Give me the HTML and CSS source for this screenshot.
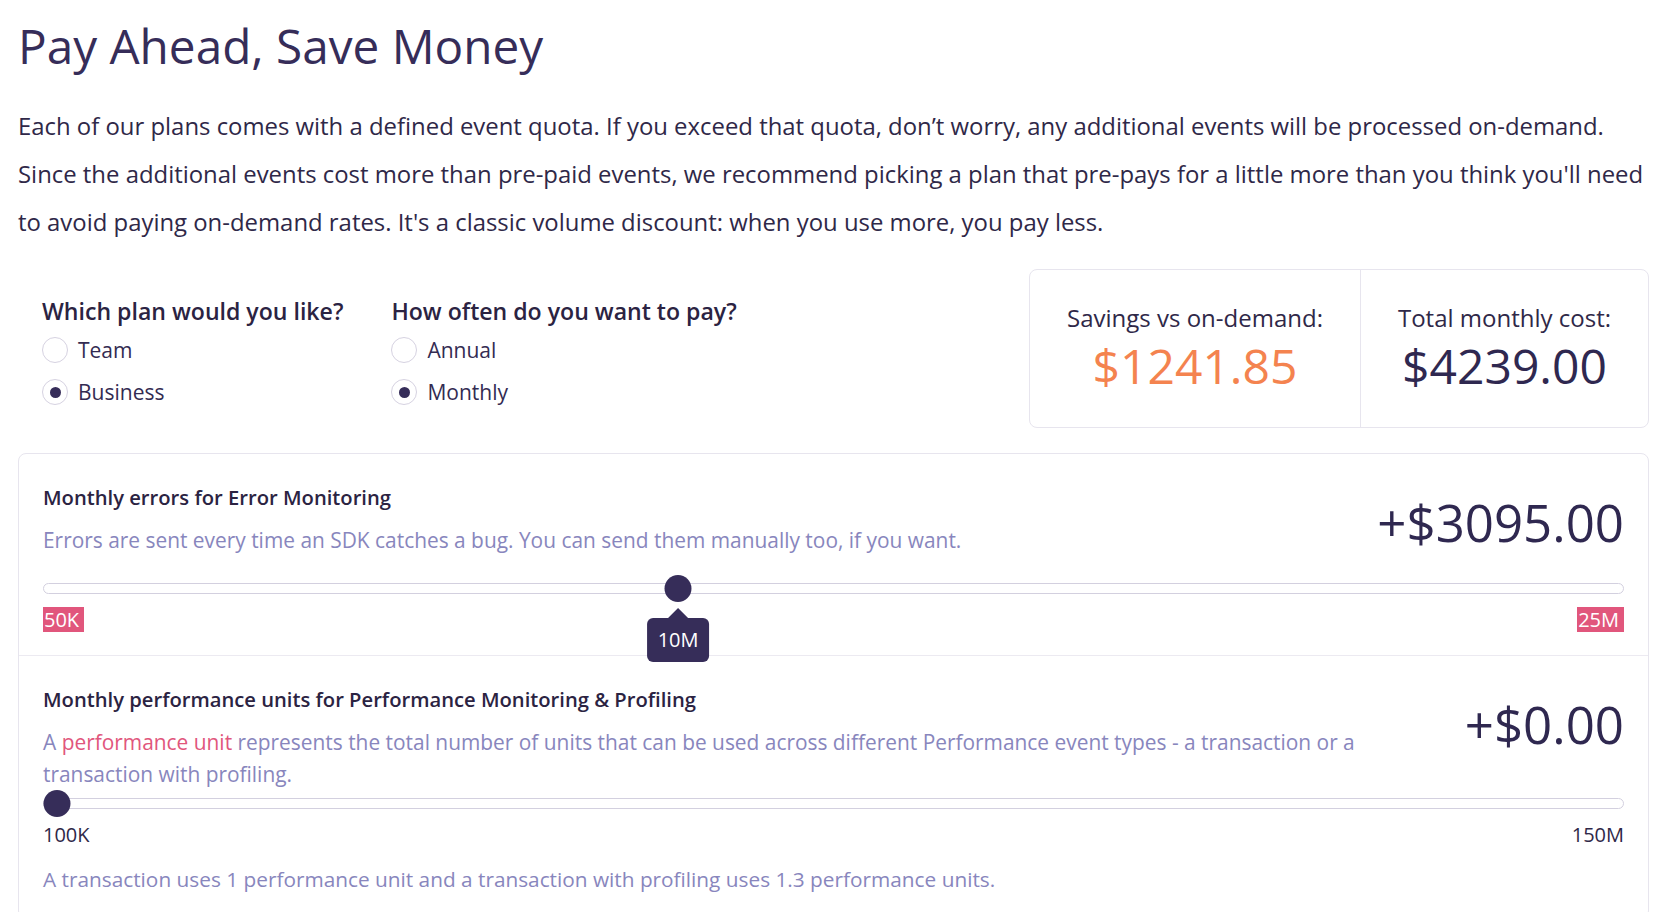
FILE: index.html
```html
<!DOCTYPE html>
<html lang="en">
<head>
<meta charset="utf-8">
<title>Pay Ahead, Save Money</title>
<link rel="stylesheet" href="styles.css">
</head>
<body>
<main class="page">
  <h1 class="title">Pay Ahead, Save Money</h1>
  <p class="intro">Each of our plans comes with a defined event quota. If you exceed that quota, don’t worry, any additional events will be processed on-demand.<br>Since the additional events cost more than pre-paid events, we recommend picking a plan that pre-pays for a little more than you think you'll need<br>to avoid paying on-demand rates. It's a classic volume discount: when you use more, you pay less.</p>

  <section class="controls">
    <div class="choices">
      <div class="choice-group">
        <div class="question">Which plan would you like?</div>
        <label class="radio"><span class="radio-circle"></span>Team</label>
        <label class="radio is-checked"><span class="radio-circle"></span>Business</label>
      </div>
      <div class="choice-group">
        <div class="question">How often do you want to pay?</div>
        <label class="radio"><span class="radio-circle"></span>Annual</label>
        <label class="radio is-checked"><span class="radio-circle"></span>Monthly</label>
      </div>
    </div>
    <div class="summary">
      <div class="summary-cell">
        <div class="summary-label">Savings vs on-demand:</div>
        <div class="summary-value is-savings">$1241.85</div>
      </div>
      <div class="summary-cell">
        <div class="summary-label">Total monthly cost:</div>
        <div class="summary-value">$4239.00</div>
      </div>
    </div>
  </section>

  <section class="products">
    <div class="product">
      <div class="product-head">
        <div class="product-info">
          <div class="product-title">Monthly errors for Error Monitoring</div>
          <p class="product-desc">Errors are sent every time an SDK catches a bug. You can send them manually too, if you want.</p>
        </div>
        <div class="product-price">+$3095.00</div>
      </div>
      <div class="slider">
        <div class="slider-track"></div>
        <div class="slider-rail">
          <div class="slider-thumb" style="left: 40%">
            <div class="tooltip">10M</div>
          </div>
        </div>
      </div>
      <div class="slider-labels">
        <span class="tick is-limit">50K</span>
        <span class="tick is-limit">25M</span>
      </div>
    </div>

    <div class="product">
      <div class="product-head">
        <div class="product-info">
          <div class="product-title">Monthly performance units for Performance Monitoring &amp; Profiling</div>
          <p class="product-desc">A <span class="accent">performance unit</span> represents the total number of units that can be used across different Performance event types - a transaction or a transaction with profiling.</p>
        </div>
        <div class="product-price">+$0.00</div>
      </div>
      <div class="slider">
        <div class="slider-track"></div>
        <div class="slider-rail">
          <div class="slider-thumb" style="left: 0%"></div>
        </div>
      </div>
      <div class="slider-labels">
        <span class="tick">100K</span>
        <span class="tick">150M</span>
      </div>
      <p class="product-note">A transaction uses 1 performance unit and a transaction with profiling uses 1.3 performance units.</p>
    </div>
  </section>
</main>
</body>
</html>
```
FILE: styles.css
```css
* {
  box-sizing: border-box;
}

body {
  margin: 0;
  background: #ffffff;
  color: #332b52;
  font-family: "Open Sans", "Noto Sans", "Liberation Sans", sans-serif;
}

.page {
  padding: 0 11px 0 18px;
}

.title {
  margin: 15px 0 0;
  font-size: 47.7px;
  line-height: 62px;
  font-weight: 400;
  color: #362d59;
}

.intro {
  margin: 25px 0 0;
  font-size: 23.9px;
  line-height: 48px;
  color: #2f2848;
}

/* controls row */
.controls {
  display: flex;
  justify-content: space-between;
  align-items: flex-start;
  margin-top: 23px;
}

.choices {
  display: flex;
  gap: 48px;
  padding: 27px 0 0 24px;
}

.question {
  font-size: 23.1px;
  line-height: 30px;
  font-weight: 600;
  color: #2b2342;
}

.radio {
  display: flex;
  align-items: center;
  gap: 10px;
  height: 40px;
  margin-top: 2px;
  font-size: 21px;
  color: #332b52;
}

.radio:first-of-type {
  margin-top: 4px;
}

.radio-circle {
  display: grid;
  place-items: center;
  width: 26px;
  height: 26px;
  border: 1px solid #d6d2e1;
  border-radius: 50%;
  background: #fff;
}

.radio.is-checked .radio-circle::after {
  content: "";
  width: 11px;
  height: 11px;
  border-radius: 50%;
  background: #362d59;
}

.summary {
  display: flex;
  border: 1px solid #e7e5ee;
  border-radius: 8px;
}

.summary-cell {
  padding: 32px 37px 31px;
  text-align: center;
}

.summary-cell + .summary-cell {
  border-left: 1px solid #e7e5ee;
}

.summary-label {
  font-size: 24px;
  line-height: 32px;
  color: #2f2848;
}

.summary-value {
  margin-top: 2px;
  font-size: 48px;
  line-height: 60px;
  color: #2f2850;
}

.summary-value.is-savings {
  color: #f4834f;
}

/* products card */
.products {
  margin-top: 25px;
  border: 1px solid #e7e5ee;
  border-radius: 8px;
}

.product {
  padding: 28px 24px 23px;
}

.product + .product {
  border-top: 1px solid #eceaf1;
}

.product-head {
  display: flex;
  align-items: flex-start;
  gap: 48px;
  min-height: 93px;
}

.product-info {
  flex: 1;
}

.product-title {
  font-size: 20.2px;
  line-height: 30px;
  font-weight: 600;
  color: #2b2342;
}

.product-desc {
  margin: 12px 0 0;
  font-size: 20.9px;
  line-height: 32px;
  color: #8886bd;
}

.accent {
  color: #e1567c;
}

.product-price {
  font-size: 51px;
  line-height: 80px;
  color: #2f2850;
  white-space: nowrap;
}

.slider {
  position: relative;
  height: 27px;
}

.slider-track {
  position: absolute;
  left: 0;
  right: 0;
  top: 8px;
  height: 11px;
  border: 1px solid #d3d0df;
  border-radius: 6px;
  background: #fff;
}

.slider-rail {
  position: absolute;
  top: 0;
  bottom: 0;
  left: 13.5px;
  right: 13.5px;
}

.slider-thumb {
  position: absolute;
  top: 0;
  width: 27px;
  height: 27px;
  border-radius: 50%;
  background: #362d59;
  transform: translateX(-50%);
}

.tooltip {
  position: absolute;
  top: calc(100% + 16px);
  left: 50%;
  transform: translateX(-50%);
  padding: 0 11px;
  border-radius: 6px;
  background: #362d59;
  color: #fff;
  font-size: 20px;
  line-height: 44px;
  white-space: nowrap;
}

.tooltip::before {
  content: "";
  position: absolute;
  top: -10px;
  left: 50%;
  transform: translateX(-50%);
  border-left: 10px solid transparent;
  border-right: 10px solid transparent;
  border-bottom: 10px solid #362d59;
}

.slider-labels {
  display: flex;
  justify-content: space-between;
  margin-top: 5px;
  font-size: 20px;
  line-height: 25px;
  color: #2f2848;
}

.tick.is-limit {
  padding: 0 5px 0 1px;
  background: #e1567c;
  color: #fff;
}

.product-note {
  margin: 16px 0 0;
  font-size: 20.8px;
  line-height: 32px;
  color: #8886bd;
}
```
